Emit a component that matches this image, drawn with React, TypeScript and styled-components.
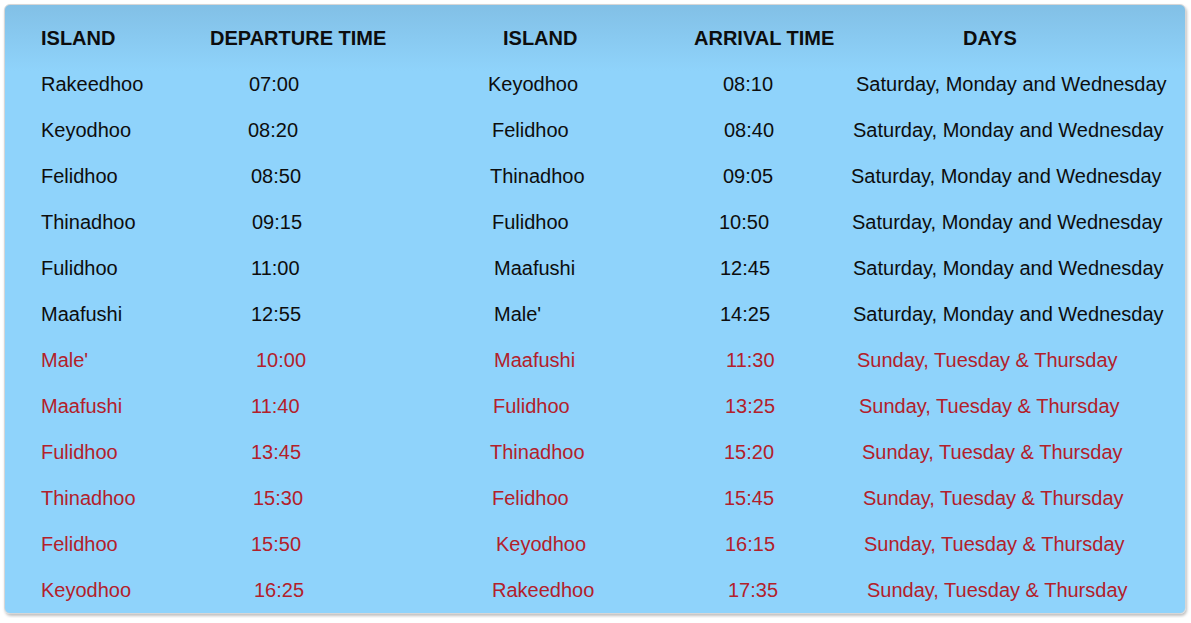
import styled, { createGlobalStyle } from "styled-components";

const GlobalStyle = createGlobalStyle`
  body {
    margin: 0;
    background: #ffffff;
    font-family: "Liberation Sans", Arial, sans-serif;
  }
`;

const Page = styled.div`
  padding: 4px;
  width: 1182px;
`;

const Card = styled.div`
  border: 1px solid #d6d6d6;
  border-radius: 6px;
  box-shadow: 1px 2px 3px rgba(0, 0, 0, 0.25);
  background: linear-gradient(to bottom, #82c0e6 0px, #8fd3fb 66px, #8fd3fb 100%);
  padding: 10px 0 0 36px;
  overflow: hidden;
`;

const Row = styled.div`
  display: grid;
  grid-template-columns: 164px 280px 205px 158px 1fr;
  height: 46px;
  align-items: center;
`;

const Cell = styled.div<{ $offset: number; $late?: boolean; $head?: boolean }>`
  padding-left: ${(p) => p.$offset}px;
  font-size: 20px;
  line-height: 23px;
  white-space: nowrap;
  font-weight: ${(p) => (p.$head ? 700 : 400)};
  color: ${(p) => (p.$late ? "#b3202a" : "#0d0d0d")};
`;

type Trip = {
  from: string;
  dep: string;
  to: string;
  arr: string;
  days: string;
  offsets: number[];
};

const SAT = "Saturday, Monday and Wednesday";
const SUN = "Sunday, Tuesday & Thursday";

const trips: Trip[] = [
  { from: "Rakeedhoo", dep: "07:00", to: "Keyodhoo", arr: "08:10", days: SAT, offsets: [44, 3, 33, 8] },
  { from: "Keyodhoo", dep: "08:20", to: "Felidhoo", arr: "08:40", days: SAT, offsets: [43, 7, 34, 5] },
  { from: "Felidhoo", dep: "08:50", to: "Thinadhoo", arr: "09:05", days: SAT, offsets: [46, 5, 33, 3] },
  { from: "Thinadhoo", dep: "09:15", to: "Fulidhoo", arr: "10:50", days: SAT, offsets: [47, 7, 29, 4] },
  { from: "Fulidhoo", dep: "11:00", to: "Maafushi", arr: "12:45", days: SAT, offsets: [46, 9, 30, 5] },
  { from: "Maafushi", dep: "12:55", to: "Male'", arr: "14:25", days: SAT, offsets: [46, 9, 30, 5] },
  { from: "Male'", dep: "10:00", to: "Maafushi", arr: "11:30", days: SUN, offsets: [51, 9, 36, 9] },
  { from: "Maafushi", dep: "11:40", to: "Fulidhoo", arr: "13:25", days: SUN, offsets: [46, 8, 35, 11] },
  { from: "Fulidhoo", dep: "13:45", to: "Thinadhoo", arr: "15:20", days: SUN, offsets: [46, 5, 34, 14] },
  { from: "Thinadhoo", dep: "15:30", to: "Felidhoo", arr: "15:45", days: SUN, offsets: [48, 7, 34, 15] },
  { from: "Felidhoo", dep: "15:50", to: "Keyodhoo", arr: "16:15", days: SUN, offsets: [46, 11, 35, 16] },
  { from: "Keyodhoo", dep: "16:25", to: "Rakeedhoo", arr: "17:35", days: SUN, offsets: [49, 7, 38, 19] },
];

export default function App() {
  return (
    <Page>
      <GlobalStyle />
      <Card>
        <Row>
          <Cell $head $offset={0}>ISLAND</Cell>
          <Cell $head $offset={5}>DEPARTURE TIME</Cell>
          <Cell $head $offset={18}>ISLAND</Cell>
          <Cell $head $offset={4}>ARRIVAL TIME</Cell>
          <Cell $head $offset={115}>DAYS</Cell>
        </Row>
        {trips.map((t, i) => {
          const late = t.days === SUN;
          return (
            <Row key={i}>
              <Cell $late={late} $offset={0}>{t.from}</Cell>
              <Cell $late={late} $offset={t.offsets[0]}>{t.dep}</Cell>
              <Cell $late={late} $offset={t.offsets[1]}>{t.to}</Cell>
              <Cell $late={late} $offset={t.offsets[2]}>{t.arr}</Cell>
              <Cell $late={late} $offset={t.offsets[3]}>{t.days}</Cell>
            </Row>
          );
        })}
      </Card>
    </Page>
  );
}
